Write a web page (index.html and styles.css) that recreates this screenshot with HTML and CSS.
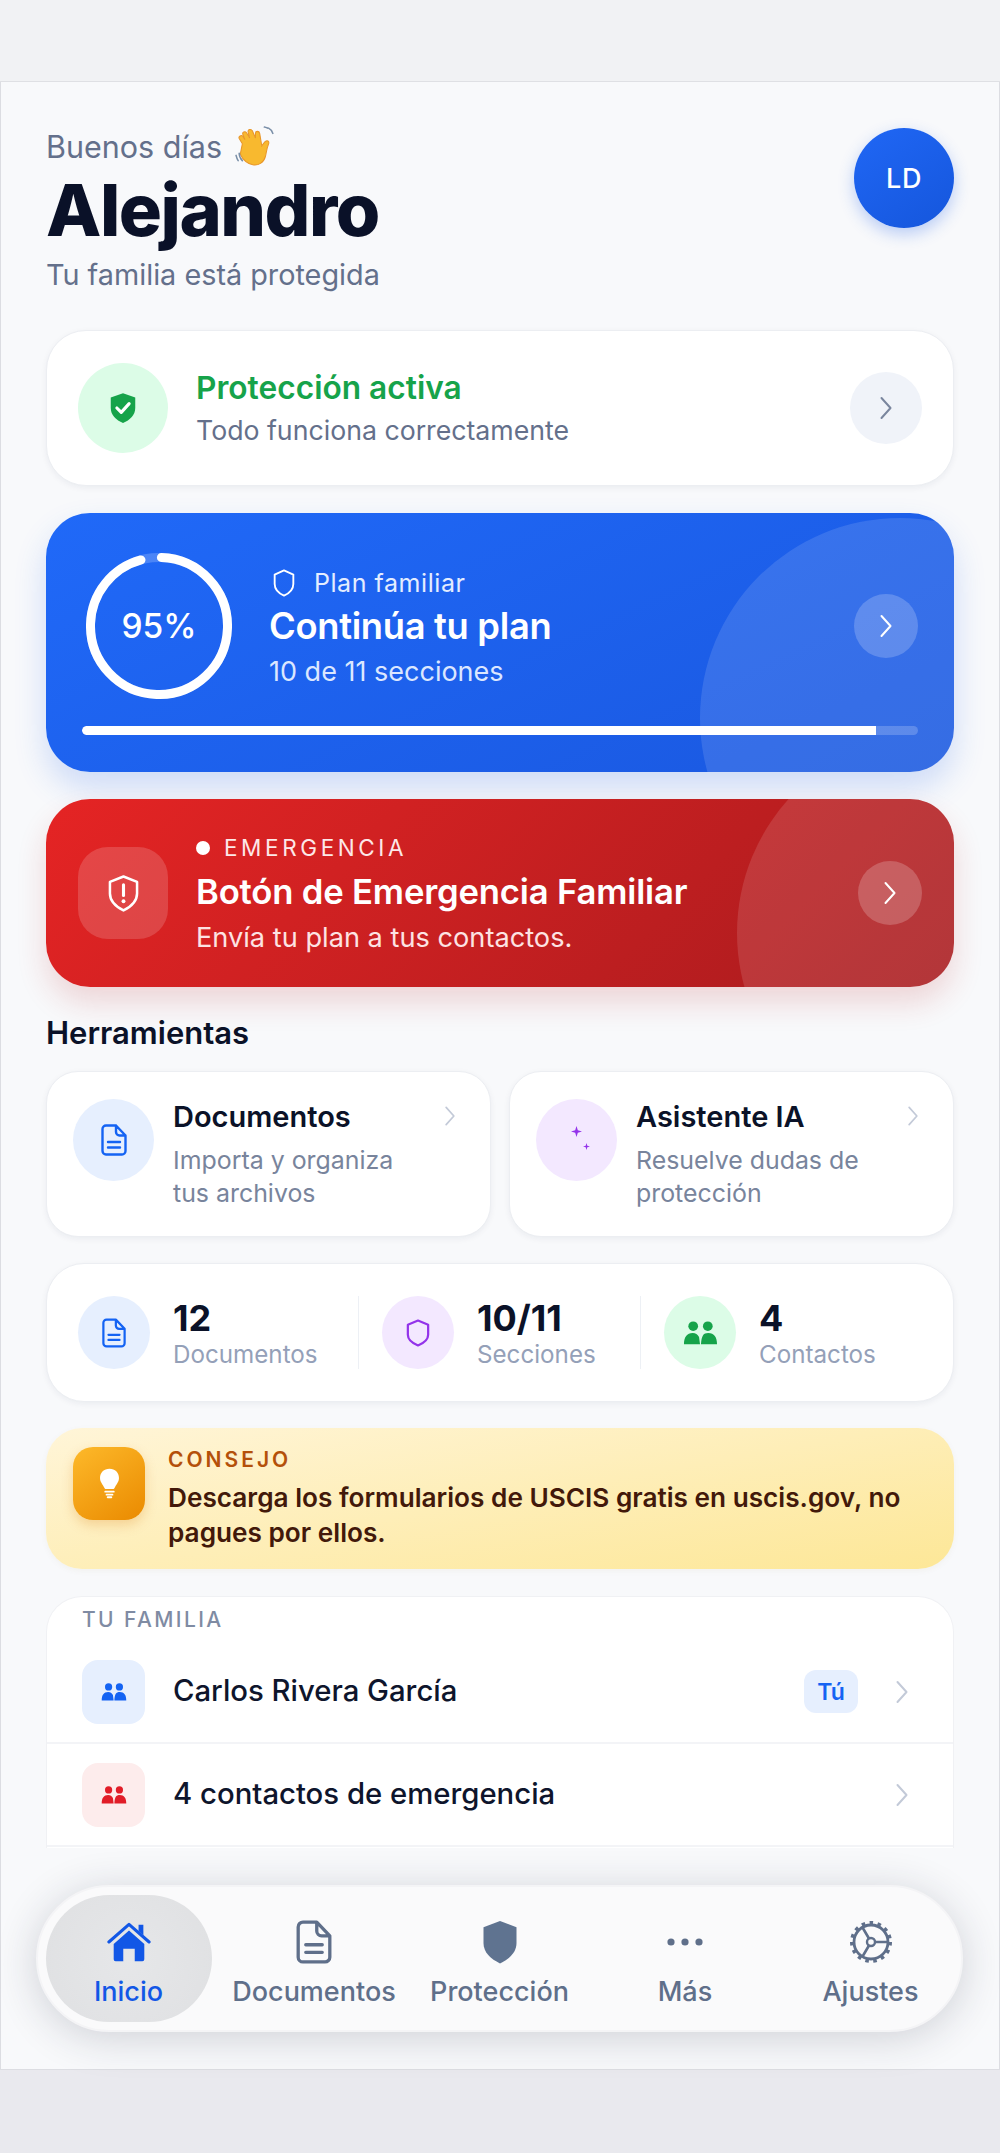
FILE: index.html
```html
<!DOCTYPE html>
<html lang="es">
<head>
<meta charset="utf-8">
<title>Inicio</title>
<link rel="stylesheet" href="styles.css">
</head>
<body>
<svg class="defs" width="0" height="0" aria-hidden="true">
  <symbol id="chev" viewBox="0 0 14 24"><path d="M2.5 2 11.5 12 2.5 22" fill="none" stroke="currentColor" stroke-width="2" stroke-linecap="round" stroke-linejoin="round"/></symbol>
  <symbol id="doc" viewBox="0 0 26 32"><path d="M5 1.5h10l9.5 10V27a3.5 3.5 0 0 1-3.5 3.5H5A3.5 3.5 0 0 1 1.5 27V5A3.5 3.5 0 0 1 5 1.5Z M15 1.5V8a3.5 3.5 0 0 0 3.5 3.5h6 M7 18h12 M7 23.500h12" fill="none" stroke="currentColor" stroke-width="2.400" stroke-linejoin="round" stroke-linecap="round"/></symbol>
  <symbol id="people" viewBox="0 0 36 30" preserveAspectRatio="none"><ellipse cx="10.500" cy="6.500" rx="5" ry="6" fill="currentColor"/><ellipse cx="25.500" cy="6.500" rx="5" ry="6" fill="currentColor"/><path d="M1 29c0-9 3-14 9-14 3 0 5 1.500 6.500 5L17.500 29Z M18.500 29c.2-6 1-9 2-11 1-2 3-3 5.500-3 6 0 9 5 9 14Z" fill="currentColor"/></symbol>
</svg>
<div class="top-band"></div>
<main class="screen">
  <div class="content">
    <header class="head">
      <div>
        <p class="hello">Buenos días
          <svg class="wave" viewBox="0 0 40 40"><path d="M7 17 4 12c-1-2 2-4 3.500-2l2 3-2-5c-1-2 2-3.500 3.500-1.500l3 5-1.500-6c-.5-2.500 3-3 4-1l3 7V7c0-2.500 3.500-2.500 4 0l2 12c2-3 3-5 5-5 1.500 0 2 1.500 1.500 3-2 5-2 8-3 12-1.500 6-7 9-12 8-6-1-10-6-12-10Z" fill="#f8b92f" stroke="#e8962a" stroke-width="1"/><path d="M4 26c0 3 1 5 3 7M1 28c.5 2 1 3.500 2 5M32 2c2 1 3.500 3 4 5M28 1c1 .2 2 .6 3 1" fill="none" stroke="#7a8fa8" stroke-width="1.500" stroke-linecap="round"/></svg>
        </p>
        <h1 class="name">Alejandro</h1>
        <p class="safe">Tu familia está protegida</p>
      </div>
      <div class="avatar">LD</div>
    </header>

    <section class="card status">
      <div class="status-icon">
        <svg viewBox="0 0 32 36" class="i-shield"><path d="M16 1 30 6v12c0 8-6 14-14 17C8 32 2 26 2 18V6Z" fill="#16a34a"/><path d="m9 18 5 5 9-10" fill="none" stroke="#fff" stroke-width="3.600" stroke-linecap="round" stroke-linejoin="round"/></svg>
      </div>
      <div class="grow">
        <h2 class="status-title">Protección activa</h2>
        <p class="status-sub">Todo funciona correctamente</p>
      </div>
      <div class="round-btn grey"><svg class="i-chev"><use href="#chev"/></svg></div>
    </section>

    <section class="hero blue">
      <span class="blob blob-blue"></span>
      <div class="hero-row">
        <div class="ring">
          <svg viewBox="0 0 146 146"><circle cx="73" cy="73" r="68.500" fill="none" stroke="#ffffff33" stroke-width="9"/><circle class="ring-val" cx="73" cy="73" r="68.500" fill="none" stroke="#fff" stroke-width="9" stroke-linecap="round" stroke-dasharray="409 430"/></svg>
          <span class="ring-text">95%</span>
        </div>
        <div class="grow plan-text">
          <p class="plan-label"><svg viewBox="0 0 24 30" class="i-plan"><path d="M12 1.500 22 6v10c0 6-4.500 10-10 12.500C6.500 26 2 22 2 16V6Z" fill="none" stroke="#fff" stroke-width="2" stroke-linejoin="round"/></svg>Plan familiar</p>
          <h2 class="plan-title">Continúa tu plan</h2>
          <p class="plan-sub">10 de 11 secciones</p>
        </div>
        <div class="round-btn glass"><svg class="i-chev"><use href="#chev"/></svg></div>
      </div>
      <div class="bar"><div class="bar-fill"></div></div>
    </section>

    <section class="hero red">
      <span class="blob blob-red"></span>
      <div class="alert-icon">
        <svg viewBox="0 0 32 38" class="i-alert"><path d="M16 1.500 30 7v12c0 8-6 13.500-14 17.500C8 32.500 2 27 2 19V7Z" fill="none" stroke="#fff" stroke-width="2.600" stroke-linejoin="round"/><path d="M16 10v11" stroke="#fff" stroke-width="3.200" stroke-linecap="round"/><circle cx="16" cy="27" r="2" fill="#fff"/></svg>
      </div>
      <div class="grow alert-text">
        <p class="alert-label"><span class="dot"></span>EMERGENCIA</p>
        <h2 class="alert-title">Botón de Emergencia Familiar</h2>
        <p class="alert-sub">Envía tu plan a tus contactos.</p>
      </div>
      <div class="round-btn glass"><svg class="i-chev"><use href="#chev"/></svg></div>
    </section>

    <h3 class="section-title">Herramientas</h3>

    <div class="tools">
      <section class="card tool">
        <div class="tool-icon bg-blue c-blue"><svg class="i-doc"><use href="#doc"/></svg></div>
        <div class="grow">
          <h4 class="tool-title">Documentos</h4>
          <p class="tool-desc">Importa y organiza tus archivos</p>
        </div>
        <svg class="i-chev tool-chev"><use href="#chev"/></svg>
      </section>
      <section class="card tool">
        <div class="tool-icon bg-purple">
          <svg viewBox="0 0 81 81" class="i-spark"><path d="M40.500 26 41.800 30.200 46 31.500 41.800 32.800 40.500 37 39.200 32.800 35 31.500 39.200 30.200Z M50.500 43 51.300 45.700 54 46.500 51.300 47.300 50.500 50 49.700 47.300 47 46.500 49.700 45.700Z" fill="#9333ea"/></svg>
        </div>
        <div class="grow">
          <h4 class="tool-title">Asistente IA</h4>
          <p class="tool-desc">Resuelve dudas de protección</p>
        </div>
        <svg class="i-chev tool-chev"><use href="#chev"/></svg>
      </section>
    </div>

    <section class="card stats">
      <div class="stat stat-a">
        <div class="stat-icon bg-blue c-blue"><svg class="i-doc-s"><use href="#doc"/></svg></div>
        <div><div class="stat-num">12</div><div class="stat-label">Documentos</div></div>
      </div>
      <div class="stat stat-b">
        <div class="stat-icon bg-purple"><svg viewBox="0 0 26 30" class="i-doc-s"><path d="M13 1.500 24 6v11c0 5.500-4.500 9-11 11.500C6.500 26 2 22.500 2 17V6Z" fill="none" stroke="#9333ea" stroke-width="2.400" stroke-linejoin="round"/></svg></div>
        <div><div class="stat-num">10/11</div><div class="stat-label">Secciones</div></div>
      </div>
      <div class="stat stat-c">
        <div class="stat-icon bg-green c-green"><svg class="i-people-l"><use href="#people"/></svg></div>
        <div><div class="stat-num">4</div><div class="stat-label">Contactos</div></div>
      </div>
    </section>

    <section class="tip">
      <div class="tip-icon">
        <svg viewBox="0 0 24 36" class="i-bulb"><path d="M12 1C5.500 1 1 5.500 1 11.500c0 5 3.500 7.500 5 11.500 .4 1 1 1.500 2 1.500h8c1 0 1.600-.5 2-1.500 1.500-4 5-6.500 5-11.500C23 5.500 18.500 1 12 1Z" fill="#fff"/><path d="M7 27.500h10M8.500 31h7" stroke="#fff" stroke-width="2" stroke-linecap="round"/><path d="M10 34h4" stroke="#fff" stroke-width="2.400" stroke-linecap="round"/></svg>
      </div>
      <div class="grow">
        <p class="tip-label">CONSEJO</p>
        <p class="tip-text">Descarga los formularios de USCIS gratis en uscis.gov, no pagues por ellos.</p>
      </div>
    </section>

    <section class="family">
      <p class="family-label">TU FAMILIA</p>
      <div class="row">
        <div class="row-icon bg-blue c-blue"><svg class="i-people-s"><use href="#people"/></svg></div>
        <span class="row-name grow">Carlos Rivera García</span>
        <span class="badge">Tú</span>
        <svg class="i-chev row-chev"><use href="#chev"/></svg>
      </div>
      <div class="row">
        <div class="row-icon bg-pink c-red"><svg class="i-people-s"><use href="#people"/></svg></div>
        <span class="row-name grow">4 contactos de emergencia</span>
        <svg class="i-chev row-chev"><use href="#chev"/></svg>
      </div>
    </section>
  </div>

  <nav class="nav">
    <a class="nav-item active">
      <svg viewBox="0 0 46 42" class="nav-icon"><path d="M2 21 23 2.500 44 21" fill="none" stroke="#1257e6" stroke-width="3.200" stroke-linecap="round" stroke-linejoin="round"/><path d="M33 3h5v11l-5-4.500Z" fill="#1257e6"/><path d="M23 9 39 23v16a2 2 0 0 1-2 2h-8V28h-12v13H9a2 2 0 0 1-2-2V23Z" fill="#1257e6"/></svg>
      <span>Inicio</span>
    </a>
    <a class="nav-item">
      <svg class="nav-icon doc-nav"><use href="#doc"/></svg>
      <span>Documentos</span>
    </a>
    <a class="nav-item">
      <svg viewBox="0 0 32 40" class="nav-icon"><path d="M16 1 31 6.500V21c0 8.500-6.500 14.500-15 18.500C7.500 35.500 1 29.500 1 21V6.500Z" fill="#5f7390"/></svg>
      <span>Protección</span>
    </a>
    <a class="nav-item">
      <svg viewBox="0 0 38 10" class="nav-icon dots"><circle cx="5" cy="5" r="3.600" fill="#5f6f8a"/><circle cx="19" cy="5" r="3.600" fill="#5f6f8a"/><circle cx="33" cy="5" r="3.600" fill="#5f6f8a"/></svg>
      <span>Más</span>
    </a>
    <a class="nav-item">
      <svg viewBox="0 0 44 44" class="nav-icon"><circle cx="22" cy="22" r="17" fill="none" stroke="#5f6f8a" stroke-width="2.800"/><circle cx="22" cy="22" r="19" fill="none" stroke="#5f6f8a" stroke-width="4" stroke-dasharray="3.500 4.460"/><circle cx="22" cy="22" r="4" fill="none" stroke="#5f6f8a" stroke-width="2.400"/><path d="M26 22h13M20 18.500 13.500 7.500M20 25.500 13.500 36.500" stroke="#5f6f8a" stroke-width="2.600" fill="none"/></svg>
      <span>Ajustes</span>
    </a>
  </nav>
</main>
</body>
</html>
```
FILE: styles.css
```css
* { box-sizing: border-box; }
html, body { margin: 0; padding: 0; }
body {
  width: 1000px;
  height: 2153px;
  overflow: hidden;
  background: #e9e9ee;
  font-family: Inter, "Liberation Sans", sans-serif;
  color: #0b1228;
}
p, h1, h2, h3, h4 { margin: 0; font-weight: 400; }
.defs { position: absolute; }
.grow { flex: 1; min-width: 0; }

.top-band { height: 82px; background: #f1f2f4; border-bottom: 1px solid #dfe0e4; }
.screen {
  height: 1988px;
  background: #f8f9fb;
  border: 1px solid #dcdde2;
  border-top: 0;
  display: flex;
  flex-direction: column;
  align-items: stretch;
  position: relative;
}
.content { height: 1766px; overflow: hidden; padding: 0 45px; flex: none; }

.head { display: flex; justify-content: space-between; padding: 45px 0 0; height: 248px; }
.hello { font-size: 30.500px; line-height: 40px; color: #64708b; display: flex; align-items: center; gap: 11px; }
.wave { width: 46px; height: 42px; margin: -2px 0; }
.name { font-size: 72px; line-height: 78px; font-weight: 800; letter-spacing: -1.500px; color: #0a1128; margin-top: 4px; }
.safe { font-size: 28.800px; line-height: 38px; color: #64708b; margin-top: 7px; }
.avatar {
  width: 100px; height: 100px; border-radius: 50%;
  background: linear-gradient(145deg, #2067f5, #1556dc);
  color: #fff; font-size: 27px; font-weight: 500; letter-spacing: .5px;
  display: flex; align-items: center; justify-content: center;
  box-shadow: 0 6px 16px rgba(37, 99, 235, .3);
  margin-top: 1px;
}

.card {
  background: #fff;
  border: 1px solid #eceef2;
  box-shadow: 0 2px 6px rgba(20, 30, 60, .06);
}
.status {
  height: 156px; border-radius: 40px;
  display: flex; align-items: center;
  padding: 0 31px; gap: 28px;
}
.status-icon {
  width: 90px; height: 90px; border-radius: 50%; background: #dcfce7;
  display: flex; align-items: center; justify-content: center;
}
.i-shield { width: 28px; height: 32px; }
.status-title { font-size: 31.700px; line-height: 40px; font-weight: 600; color: #16a34a; }
.status-sub { font-size: 26.700px; line-height: 36px; color: #64708b; margin-top: 4px; }

.round-btn {
  width: 64px; height: 64px; border-radius: 50%; flex: none;
  display: flex; align-items: center; justify-content: center; color: #fff;
}
.round-btn.grey { width: 72px; height: 72px; background: #f0f3f9; color: #7a869e; }
.round-btn.glass { background: rgba(255, 255, 255, .2); }
.i-chev { width: 14px; height: 24px; }

.hero { position: relative; overflow: hidden; color: #fff; margin-top: 27px; border-radius: 44px; }
.blob { position: absolute; width: 400px; height: 400px; border-radius: 50%; background: rgba(255, 255, 255, .12); }
.blue {
  height: 259px;
  background: linear-gradient(155deg, #2069f8, #1a58e0);
  box-shadow: 0 16px 32px rgba(37, 99, 235, .2);
}
.blob-blue { left: 654px; top: 5px; }
.hero-row { display: flex; align-items: center; padding: 40px 36px 0 40px; position: relative; }
.ring { width: 146px; height: 146px; position: relative; flex: none; }
.ring svg { width: 146px; height: 146px; display: block; }
.ring-val { transform: rotate(-88deg); transform-origin: 73px 73px; }
.ring-text {
  position: absolute; inset: 0; display: flex; align-items: center; justify-content: center;
  font-size: 33.500px; font-weight: 500;
}
.plan-text { margin-left: 37px; }
.plan-label { font-size: 25px; letter-spacing: .55px; line-height: 32px; display: flex; align-items: center; gap: 18px; color: #e4edff; padding: 3px 0 0 3px; }
.i-plan { width: 24px; height: 28px; }
.plan-title { font-size: 36.300px; line-height: 46px; font-weight: 600; margin-top: 4px; letter-spacing: -.3px; }
.plan-sub { font-size: 27px; line-height: 34px; margin-top: 6px; color: #dbe7ff; }
.bar { height: 9px; border-radius: 5px; background: rgba(255, 255, 255, .2); margin: 27px 36px 0; position: relative; overflow: hidden; }
.bar-fill { width: 95%; height: 100%; background: #fff; border-radius: 5px 0 0 5px; }

.red {
  height: 188px;
  background: linear-gradient(135deg, #e52424, #a81b1e);
  box-shadow: 0 16px 30px rgba(185, 28, 28, .16);
  display: flex; align-items: center;
  padding: 0 32px;
  gap: 28px;
}
.blob-red { left: 691px; top: -66px; }
.alert-icon {
  width: 90px; height: 92px; border-radius: 30px; background: rgba(255, 255, 255, .16);
  display: flex; align-items: center; justify-content: center; flex: none; position: relative;
}
.i-alert { width: 31px; height: 37px; }
.alert-text { position: relative; padding-top: 3px; }
.alert-label { font-size: 22.500px; line-height: 28px; letter-spacing: 3.600px; display: flex; align-items: center; gap: 14px; color: #fde8e8; }
.dot { width: 14px; height: 14px; border-radius: 50%; background: #fff; }
.alert-title { font-size: 34.700px; line-height: 44px; font-weight: 600; margin-top: 7px; letter-spacing: -.2px; }
.alert-sub { font-size: 27.200px; line-height: 34px; margin-top: 8px; color: #fde3e3; }
.red .round-btn { position: relative; }

.section-title { font-size: 31px; line-height: 40px; font-weight: 600; margin: 26px 0 18px; }

.tools { display: grid; grid-template-columns: 445px 445px; gap: 18px; }
.tool {
  height: 166px; border-radius: 32px; display: flex; align-items: flex-start;
  padding: 27px 34px 27px 26px; gap: 19px; position: relative;
}
.tool-icon {
  width: 81px; height: 82px; border-radius: 50%; flex: none;
  display: flex; align-items: center; justify-content: center;
}
.i-doc { width: 26px; height: 32px; }
.i-spark { width: 81px; height: 81px; }
.tool-title { font-size: 29px; line-height: 38px; font-weight: 600; margin-top: -1px; }
.tool-desc { font-size: 24.900px; line-height: 33px; color: #78849c; margin-top: 8px; max-width: 240px; }
.tool-chev { color: #c3cad8; width: 12px; height: 22px; flex: none; margin-top: 6px; }

.bg-blue { background: #e6effe; }
.bg-purple { background: #f3e8ff; }
.bg-green { background: #dcfce7; }
.bg-pink { background: #fdecec; }
.c-blue { color: #1463f3; }
.c-green { color: #16a34a; }
.c-red { color: #e11d28; }

.stats { height: 139px; border-radius: 38px; margin-top: 26px; display: flex; align-items: center; padding: 0 0 0 31px; }
.stat { display: flex; align-items: center; gap: 23px; height: 73px; }
.stat-a { width: 281px; border-right: 1px solid #edf0f5; }
.stat-b { width: 282px; padding-left: 23px; border-right: 1px solid #edf0f5; }
.stat-c { padding-left: 23px; }
.stat-icon { width: 72px; height: 73px; border-radius: 50%; flex: none; display: flex; align-items: center; justify-content: center; }
.i-doc-s { width: 24px; height: 30px; }
.i-people-l { width: 35px; height: 24px; }
.stat-num { font-size: 36px; line-height: 44px; font-weight: 700; }
.stat-label { font-size: 24.200px; line-height: 30px; color: #94a0b8; }

.tip {
  height: 141px; border-radius: 36px; margin-top: 26px;
  background: linear-gradient(170deg, #fff5d8, #fde797);
  display: flex; align-items: flex-start; padding: 19px 26px 19px 27px; gap: 23px;
  box-shadow: 0 2px 6px rgba(120, 90, 0, .05);
}
.tip-icon {
  width: 72px; height: 73px; border-radius: 20px; flex: none;
  background: linear-gradient(145deg, #fdb92a, #ea8a00);
  display: flex; align-items: center; justify-content: center;
  box-shadow: 0 5px 12px rgba(217, 119, 6, .25);
}
.i-bulb { width: 21px; height: 31px; }
.tip-label { font-size: 21px; line-height: 26px; font-weight: 600; letter-spacing: 3px; color: #b4500a; }
.tip-text { font-size: 26.200px; line-height: 35px; font-weight: 600; color: #43190a; margin-top: 7px; }

.family {
  margin-top: 27px; background: #fff; border: 1px solid #f0f1f4; border-bottom: 0;
  border-radius: 36px 36px 0 0; height: 253px; overflow: hidden;
}
.family-label { font-size: 21px; line-height: 26px; letter-spacing: 2.400px; color: #7f8ba3; font-weight: 500; padding: 10px 0 0 35px; height: 44px; }
.row { display: flex; align-items: center; height: 103px; padding: 0 44px 0 35px; gap: 28px; border-bottom: 2px solid #f3f4f7; }
.row-icon { width: 63px; height: 64px; border-radius: 16px; flex: none; display: flex; align-items: center; justify-content: center; }
.i-people-s { width: 26px; height: 18px; }
.row-name { font-size: 29.300px; font-weight: 500; color: #0e152c; margin-top: -2px; }
.badge { width: 54px; height: 43px; border-radius: 12px; background: #e6effe; color: #1463f3; font-size: 23px; font-weight: 600; display: flex; align-items: center; justify-content: center; margin-right: 9px; }
.row-chev { color: #c3cad8; width: 14px; height: 26px; flex: none; }

.nav {
  margin: 37px 36px 0 35px;
  height: 147px;
  border-radius: 74px;
  background: #fafafb;
  border: 2px solid #f4f4f6;
  box-shadow: 0 6px 42px rgba(30, 35, 60, .19);
  display: grid;
  grid-template-columns: repeat(5, 185.500px);
  justify-content: center;
  padding: 8px 0;
  position: relative;
}
.nav-item {
  display: flex; flex-direction: column; align-items: center; justify-content: flex-start;
  color: #5f6f8a; font-size: 27px; font-weight: 500; line-height: 32px;
  border-radius: 64px; padding-top: 25px;
}
.nav-item span { margin-top: 12px; }
.nav-icon { width: 44px; height: 44px; color: #5f6f8a; }
.doc-nav { width: 36px; height: 44px; }
.dots { width: 38px; height: 44px; }
.active { color: #1257e6; background: radial-gradient(circle at 50% 50%, #e6e7e9, #dfe0e2); width: 166px; justify-self: center; }
```
